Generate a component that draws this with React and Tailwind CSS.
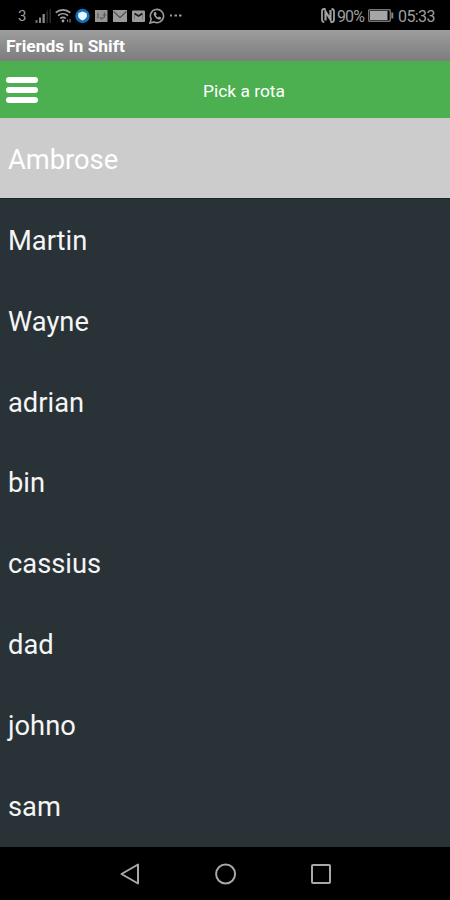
import React, { useState } from 'react';

const rotas = ['Ambrose', 'Martin', 'Wayne', 'adrian', 'bin', 'cassius', 'dad', 'johno', 'sam'];

const SignalIcon = () => (
  <svg className="ml-[9px] shrink-0" width="17" height="16" viewBox="0 0 17 16">
    <rect x="0.5" y="12" width="2" height="3" fill="#707070" />
    <rect x="4" y="9.5" width="2" height="5.5" fill="#858585" />
    <rect x="7.5" y="6" width="2.3" height="9" fill="#8a8a8a" />
    <rect x="11.5" y="2.5" width="1.5" height="12.5" fill="#2a2a2a" />
    <rect x="14.5" y="1" width="1.5" height="14" fill="#2a2a2a" />
  </svg>
);

const WifiIcon = () => (
  <svg className="ml-[3px] shrink-0" width="17" height="16" viewBox="0 0 17 16" fill="none" stroke="#a3a3a3" strokeWidth="1.6">
    <path d="M0.7 4.7C5 .9 11 .9 15.3 4.7" />
    <path d="M3 7.7C6 5 10 5 13 7.7" />
    <path d="M5.2 10.5C7 9 9 9 10.8 10.5" />
    <circle cx="8" cy="13" r="1.4" fill="#a3a3a3" stroke="none" />
    <path d="M12.5 11.5v2.5M15 11v3.5" stroke="#777777" strokeWidth="1.2" />
  </svg>
);

const ShieldIcon = () => (
  <svg className="ml-[3px] shrink-0" width="15" height="16" viewBox="0 0 15 16">
    <circle cx="7.5" cy="8" r="7.2" fill="#0d71bd" />
    <path d="M7.5 3.5 11.5 5 12 8C11.5 10 9.8 11.5 7.5 12.5 5.2 11.5 3.5 10 3 8L3.5 5Z" fill="#e8f5fb" />
  </svg>
);

const AppIcon = () => (
  <svg className="ml-[5px] shrink-0" width="13" height="14" viewBox="0 0 13 14">
    <rect y="1" width="12.5" height="12" fill="#959595" />
    <path d="M3 4v5.5M5 8l1.5 2L9.5 8V3.5M7.5 6h4" fill="none" stroke="#5c5c5c" strokeWidth="1.2" />
  </svg>
);

const MailIcon = () => (
  <svg className="ml-[5px] shrink-0" width="14" height="14" viewBox="0 0 14 14">
    <rect y="1" width="14" height="12" fill="#9b9b9b" />
    <path d="M0.5 2.5 7 8.5l6.5-6" fill="none" stroke="#565656" strokeWidth="1.3" />
  </svg>
);

const InboxIcon = () => (
  <svg className="ml-[5px] shrink-0" width="13" height="14" viewBox="0 0 13 14">
    <rect y="1.5" width="13" height="11.5" rx="1" fill="#9b9b9b" />
    <path d="M2.5 4.5 6.5 7l4-2.5" fill="none" stroke="#1c1c1c" strokeWidth="1.8" />
    <path d="M2.5 6v4.5M10.5 6v4.5" stroke="#777777" />
  </svg>
);

const WhatsappIcon = () => (
  <svg className="ml-[4px] shrink-0" width="16" height="16" viewBox="0 0 16 16">
    <path d="M1 15 2.2 11.2A6.6 6.6 0 1 1 5 13.9Z" fill="none" stroke="#9b9b9b" strokeWidth="1.6" />
    <path d="M5.3 4.2 6.8 4l.9 2.2-.9 1c.5 1 1.2 1.7 2.2 2.2l1-1 2.1 1-.2 1.5c-1 1.2-3 .7-4.9-1C4.9 8 4 5.4 5.3 4.2Z" fill="#a3a3a3" />
  </svg>
);

const NfcIcon = () => (
  <svg className="shrink-0" width="14" height="15" viewBox="0 0 14 15" fill="none" stroke="#a0a0a0">
    <path d="M4.5 1H3Q1 1 1 3.5v8Q1 14 3.2 14" strokeWidth="1.8" />
    <path d="M10.5 1Q13 1 13 3.5v8q0 2.5-2 2.5H9.5" strokeWidth="1.8" />
    <path d="M4.5 12.5V3.5l5 8V2" strokeWidth="2.2" />
  </svg>
);

const BatteryIcon = () => (
  <svg className="ml-[4px] shrink-0" width="26" height="13" viewBox="0 0 26 13">
    <rect x="0.7" y="0.7" width="21.6" height="11.6" rx="1" fill="none" stroke="#747474" strokeWidth="1.4" />
    <rect x="2" y="2" width="17.5" height="9" fill="#a6a6a6" />
    <rect x="23.3" y="3.5" width="2" height="6" fill="#858585" />
  </svg>
);

const StatusBar = () => (
  <div className="flex h-[30px] shrink-0 items-center justify-between bg-black pl-[18px] pr-[14px] pt-[1px] text-[16px] text-[#9e9e9e]">
    <div className="flex items-center">
      <span className="w-[8px] pt-[1px] text-[15px]">3</span>
      <SignalIcon />
      <WifiIcon />
      <ShieldIcon />
      <AppIcon />
      <MailIcon />
      <InboxIcon />
      <WhatsappIcon />
      <svg className="ml-[5px] shrink-0" width="12" height="3" viewBox="0 0 12 3" fill="#9b9b9b">
        <rect y="0.5" width="2" height="2" />
        <rect x="4.5" y="0.5" width="2.5" height="2" />
        <rect x="9" y="0.5" width="2.5" height="2" />
      </svg>
    </div>
    <div className="flex items-center">
      <NfcIcon />
      <span className="ml-[2px] w-[27px] pt-[2px] tracking-[-0.9px]">90%</span>
      <BatteryIcon />
      <span className="ml-[4px] w-[38px] pt-[2px] tracking-[-0.6px]">05:33</span>
    </div>
  </div>
);

const NavBar = () => (
  <div className="flex h-[53px] shrink-0 items-center justify-center gap-[74px] bg-black pr-px">
    <svg width="22" height="24" viewBox="0 0 22 24" fill="none" stroke="#a8a8a8" strokeWidth="2" strokeLinejoin="round">
      <path d="M2.5 12 19 2.5v19Z" />
    </svg>
    <svg width="22" height="22" viewBox="0 0 22 22" fill="none" stroke="#a8a8a8" strokeWidth="2">
      <circle cx="10.6" cy="11" r="9.5" />
    </svg>
    <svg width="20" height="20" viewBox="0 0 20 20" fill="none" stroke="#a8a8a8" strokeWidth="2">
      <rect x="1" y="1" width="18" height="18" rx="1" />
    </svg>
  </div>
);

const App = () => {
  const [selected, setSelected] = useState('Ambrose');

  return (
    <div className="flex h-[900px] w-[450px] flex-col overflow-hidden bg-black font-[Roboto,sans-serif]">
      <StatusBar />
      <div className="flex h-[31px] shrink-0 items-center bg-linear-to-b from-[#9d9d9d] to-[#7d7d7e] pl-[6px] pt-[2px] text-[17.4px] font-bold text-white">
        Friends In Shift
      </div>
      <header className="grid h-[57px] shrink-0 grid-cols-[38px_1fr_38px] items-center bg-[#4caf50] text-white">
        <button aria-label="Menu" className="ml-[6px] flex w-[32px] flex-col gap-[4px]">
          <span className="h-[6px] w-full rounded-[3px] bg-white"></span>
          <span className="h-[6px] w-full rounded-[3px] bg-white"></span>
          <span className="h-[6px] w-full rounded-[3px] bg-white"></span>
        </button>
        <h1 className="pl-[38px] pt-[4px] text-center text-[17.4px]">Pick a rota</h1>
      </header>
      <ul className="flex-1 bg-[#293237]">
        {rotas.map((name) => (
          <li
            key={name}
            onClick={() => setSelected(name)}
            className={`flex items-center border-b pl-[8px] pt-[5px] text-[27.3px] ${
              name === selected
                ? 'h-[81px] border-[#17262b] bg-[#cccccc] text-white'
                : 'h-[80.85px] border-[#273035] text-[#f5f5f5]'
            }`}
          >
            {name}
          </li>
        ))}
      </ul>
      <NavBar />
    </div>
  );
};

export default App;
